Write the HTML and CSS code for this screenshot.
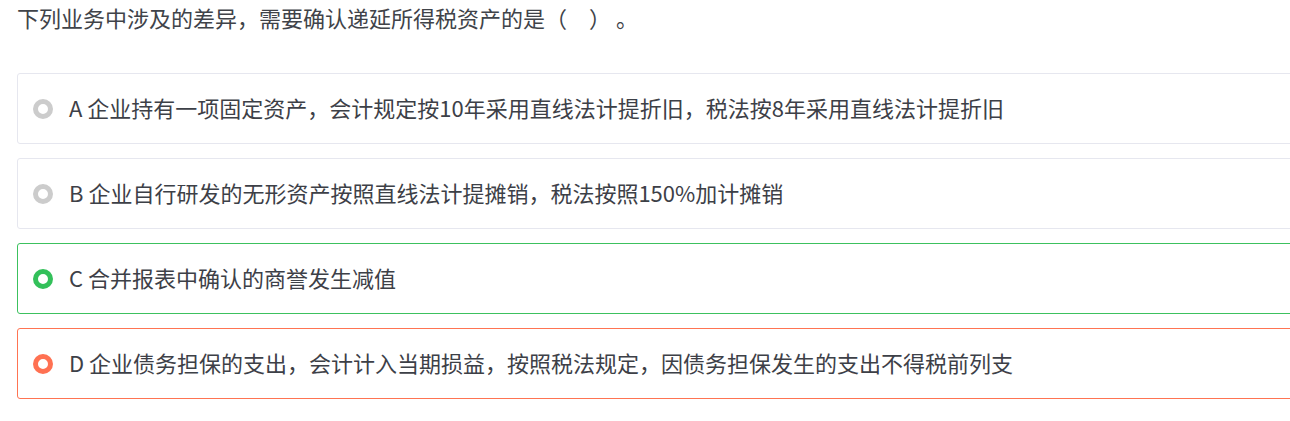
FILE: index.html
```html
<!DOCTYPE html>
<html lang="zh-CN">
<head>
<meta charset="utf-8">
<link rel="stylesheet" href="styles.css">
</head>
<body>
<div class="question">
  <div class="title">下列业务中涉及的差异，需要确认递延所得税资产的是（　）&nbsp;。</div>
  <div class="options">
    <div class="option">
      <span class="radio"></span>
      <span class="text">A 企业持有一项固定资产，会计规定按10年采用直线法计提折旧，税法按8年采用直线法计提折旧</span>
    </div>
    <div class="option">
      <span class="radio"></span>
      <span class="text">B 企业自行研发的无形资产按照直线法计提摊销，税法按照150%加计摊销</span>
    </div>
    <div class="option correct">
      <span class="radio"></span>
      <span class="text">C 合并报表中确认的商誉发生减值</span>
    </div>
    <div class="option wrong">
      <span class="radio"></span>
      <span class="text">D 企业债务担保的支出，会计计入当期损益，按照税法规定，因债务担保发生的支出不得税前列支</span>
    </div>
  </div>
</div>
</body>
</html>
```
FILE: styles.css
```css
html, body {
  margin: 0;
  padding: 0;
  background: #ffffff;
  overflow: hidden;
}
body {
  font-family: "Microsoft YaHei", "Noto Sans CJK SC", "Noto Sans", sans-serif;
  color: #3d4047;
}
.question {
  padding: 2px 0 0 17px;
  width: 1320px;
}
.title {
  font-size: 22px;
  line-height: 30px;
  color: #404349;
}
.options {
  margin-top: 41px;
  display: flex;
  flex-direction: column;
  gap: 14px;
}
.option {
  height: 69px;
  border: 1px solid #e6e7ef;
  border-radius: 3px;
  display: flex;
  align-items: center;
  padding-left: 15px;
  box-sizing: content-box;
}
.option.correct { border-color: #3cc15e; }
.option.wrong { border-color: #ff7452; }
.radio {
  width: 20px;
  height: 20px;
  box-sizing: border-box;
  border: 5px solid #cccccc;
  border-radius: 50%;
  flex: none;
}
.correct .radio { border-color: #33c05a; }
.wrong .radio { border-color: #ff7152; }
.text {
  margin-left: 16px;
  padding-bottom: 3px;
  font-size: 22px;
  line-height: 30px;
  color: #3d4047;
}
```
